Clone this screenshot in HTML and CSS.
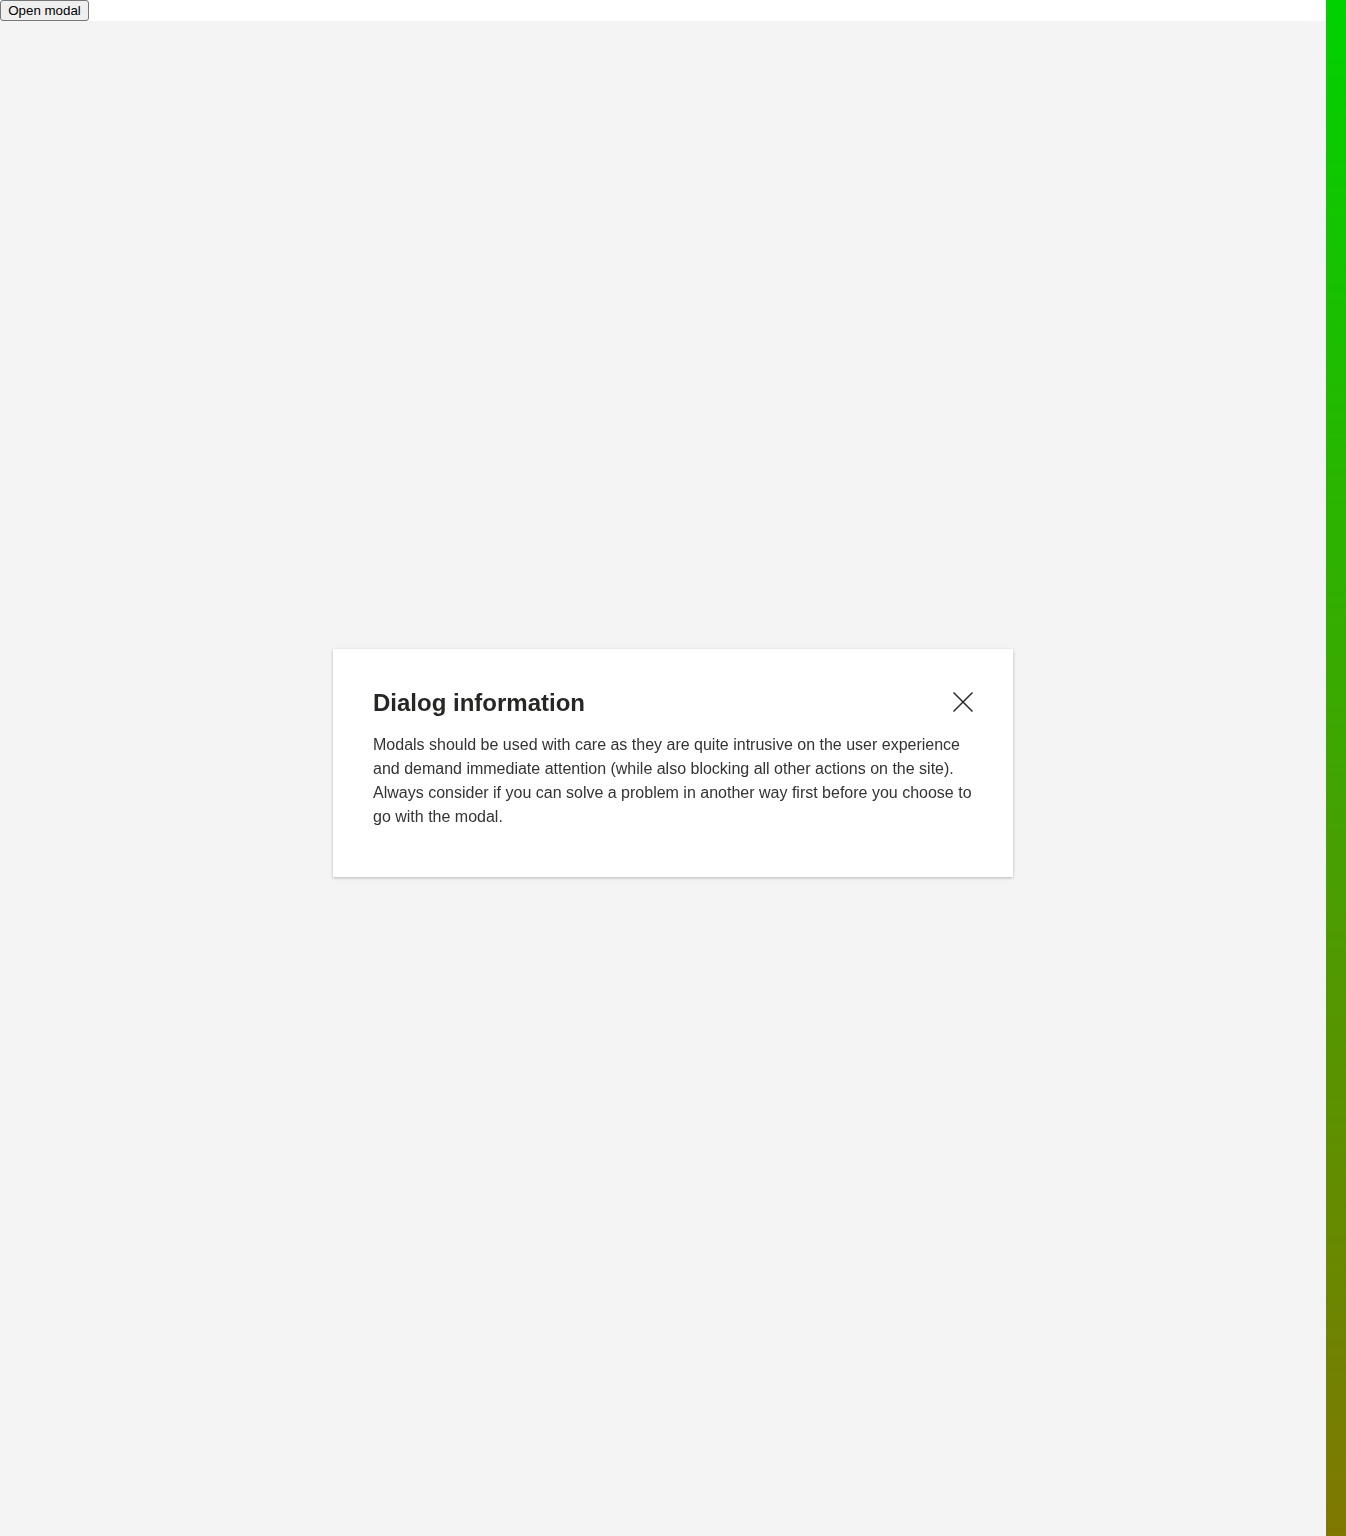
FILE: index.html
```html
<!DOCTYPE html>
<html lang="en">
<head>
<meta charset="utf-8">
<title>Modal</title>
<link rel="stylesheet" href="styles.css">
</head>
<body>
<div class="page">
  <div class="main">
    <div class="topbar"><button class="open-btn" type="button">Open modal</button></div>
    <div class="overlay"></div>
  </div>
  <div class="strip"></div>
</div>
<div class="modal" role="dialog" aria-labelledby="modal-title">
  <div class="modal-head">
    <h2 class="modal-title" id="modal-title">Dialog information</h2>
    <button class="close-btn" type="button" aria-label="Close">
      <svg width="20" height="20" viewBox="0 0 20 20" fill="none" stroke="#2b2b2b" stroke-width="1.5">
        <path d="M0.5 0.5 L19.5 19.5 M19.5 0.5 L0.5 19.5"/>
      </svg>
    </button>
  </div>
  <p class="modal-text">Modals should be used with care as they are quite intrusive on the user experience and demand immediate attention (while also blocking all other actions on the site). Always consider if you can solve a problem in another way first before you choose to go with the modal.</p>
</div>
</body>
</html>
```
FILE: styles.css
```css
html, body {
  margin: 0;
  padding: 0;
  background: #fff;
}
.page {
  display: flex;
  height: 1536px;
  overflow: hidden;
}
.main {
  flex: 1;
  display: flex;
  flex-direction: column;
}
.topbar {
  height: 21px;
  background: #fff;
}
.open-btn {
  font-family: "Liberation Sans", Arial, sans-serif;
  font-size: 13.33px;
  color: #000;
  background: #efefef;
  border: 1px solid #767676;
  border-radius: 3px;
  padding: 1px 6px;
  height: 21px;
  width: 89px;
  margin: 0;
  line-height: 16px;
}
.overlay {
  flex: 1;
  background: #f4f4f4;
}
.strip {
  width: 20px;
  background: linear-gradient(#00d200, #807800);
}
.modal {
  position: fixed;
  left: 333px;
  top: 649px;
  width: 680px;
  box-sizing: border-box;
  padding: 39px 40px 48px;
  background: #fff;
  box-shadow: 0 1px 3px rgba(0, 0, 0, 0.25);
  font-family: "Liberation Sans", Arial, sans-serif;
}
.modal-head {
  display: flex;
  justify-content: space-between;
  align-items: flex-start;
  margin-bottom: 16px;
}
.modal-title {
  margin: 0;
  font-size: 24px;
  line-height: 29px;
  font-weight: 700;
  color: #262624;
}
.close-btn {
  border: 0;
  background: none;
  padding: 0;
  margin-top: 4px;
  width: 20px;
  height: 20px;
  display: block;
  cursor: pointer;
}
.close-btn svg {
  display: block;
}
.modal-text {
  margin: 0;
  font-size: 16px;
  line-height: 24px;
  color: #333;
}
```
